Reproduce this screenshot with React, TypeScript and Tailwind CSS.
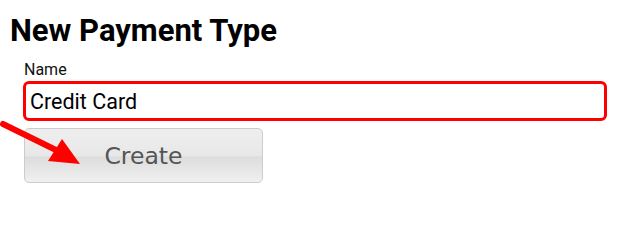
import React from "react";

function RedArrow() {
  // annotation arrow drawn over the form
  return (
    <svg
      className="pointer-events-none absolute left-0 top-0"
      width="635"
      height="204"
      viewBox="0 0 635 204"
    >
      <line x1="3" y1="124" x2="58" y2="151" stroke="#ff0000" strokeWidth="6" strokeLinecap="round" />
      <polygon points="80,164 62,139 48,161" fill="#ff0000" />
    </svg>
  );
}

export default function App() {
  return (
    <div className="relative h-[204px] w-[635px] overflow-hidden bg-white">
      <div className="px-[10px] pt-[13px]">
        <h1 className="font-['Roboto',sans-serif] text-[31px] font-bold leading-[36px] text-black">
          New Payment Type
        </h1>
        <form className="ml-[13px] mt-[13px] flex flex-col" onSubmit={(e) => e.preventDefault()}>
          <label className="ml-px font-['Roboto',sans-serif] text-[16px] leading-[16px] text-[#111]">
            Name
          </label>
          <input
            defaultValue="Credit Card"
            className="mt-[3px] h-[40px] w-[584px] rounded-[6px] border-[3px] border-[#ff0000] bg-white pl-[4px] font-['Roboto',sans-serif] text-[21.5px] text-black outline-none"
          />
          <button
            type="submit"
            className="ml-px mt-[7px] h-[55px] w-[239px] rounded-[5px] border border-[#cccccc] bg-[linear-gradient(to_bottom,#eeeeee_0%,#e8e8e8_50%,#dddddd_53%,#f0f0f0_100%)] pt-[3px] font-['DejaVu_Sans',sans-serif] text-[23.5px] text-[#555555]"
          >
            Create
          </button>
        </form>
      </div>
      <RedArrow />
    </div>
  );
}
